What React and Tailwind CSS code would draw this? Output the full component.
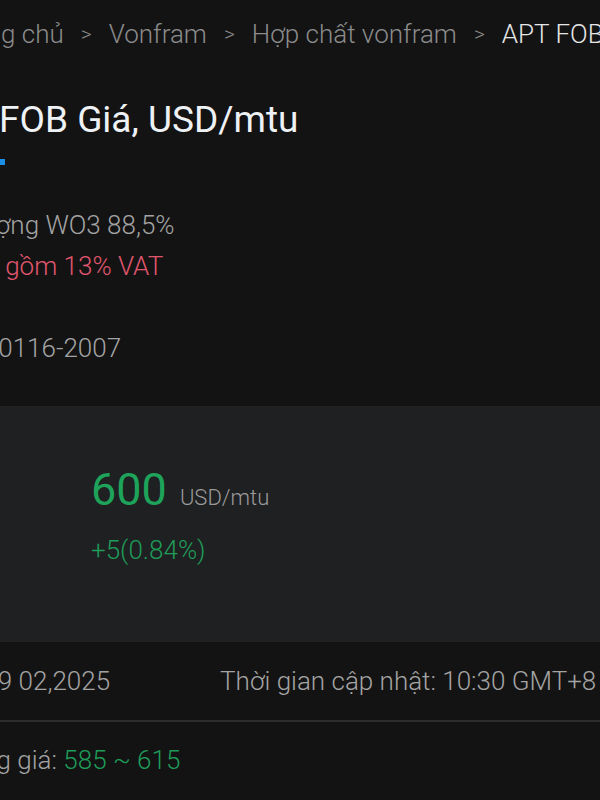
import React from 'react'

export default function App() {
  return (
    <div className="h-[800px] w-[600px] overflow-hidden bg-[#131314] font-['Roboto','Liberation_Sans',sans-serif]">
      {/* breadcrumb */}
      <div className="ml-[-50px] flex items-center gap-[17px] whitespace-nowrap pt-[18px] text-[26px] leading-[32px] font-light text-[#8b8b8b]">
        <span>Trang chủ</span>
        <span className="text-[21px]">&gt;</span>
        <span>Vonfram</span>
        <span className="text-[21px]">&gt;</span>
        <span>Hợp chất vonfram</span>
        <span className="text-[21px]">&gt;</span>
        <span className="text-[#e6e6e6]">APT FOB Giá</span>
      </div>

      {/* title */}
      <div className="ml-[-79px] mt-[48px] whitespace-nowrap">
        <h1 className="text-[37px] leading-[44px] font-normal text-[#eef2f5]">
          APT FOB Giá, USD/mtu
        </h1>
        <div className="mt-[17px] h-[6px] w-[84px] bg-[#1b8fe3]" />
      </div>

      {/* specs */}
      <div className="mt-[40px] whitespace-nowrap text-[26px] font-light leading-[41px]">
        <p className="ml-[-87px] text-[#a3a3a3]">Hàm lượng WO3 88,5%</p>
        <p className="ml-[-88px] text-[#e0566d]">Giá bao gồm 13% VAT</p>
      </div>
      <p className="ml-[-219px] mt-[41px] whitespace-nowrap text-[26px] font-light leading-[41px] text-[#a3a3a3]">
        Tiêu chuẩn: GB/T 10116-2007
      </p>

      {/* price panel */}
      <div className="mt-[37px] h-[236px] bg-[#1f2022] pl-[91px] pt-[58px]">
        <div className="flex h-[52px] items-baseline gap-[13px] whitespace-nowrap">
          <span className="text-[45px] leading-[52px] font-normal text-[#1ea35b]">600</span>
          <span className="text-[22px] font-light text-[#9a9a9a]">USD/mtu</span>
        </div>
        <p className="mt-[19px] whitespace-nowrap text-[26px] font-light leading-[30px] text-[#1e9c58]">+5(0.84%)</p>
      </div>

      {/* date row */}
      <div className="ml-[-81px] flex h-[78px] items-center gap-[110px] whitespace-nowrap text-[26px] font-light text-[#a3a3a3]">
        <span>Tháng 9 02,2025</span>
        <span>Thời gian cập nhật: 10:30 GMT+8</span>
      </div>
      <div className="h-[2px] bg-[#2c2c2e]" />

      {/* range */}
      <p className="ml-[-77px] mt-[22px] whitespace-nowrap text-[26px] font-light leading-[32px] text-[#a3a3a3]">
        Khoảng giá: <span className="text-[#1e9c58]">585 ~ 615</span>
      </p>
    </div>
  )
}
